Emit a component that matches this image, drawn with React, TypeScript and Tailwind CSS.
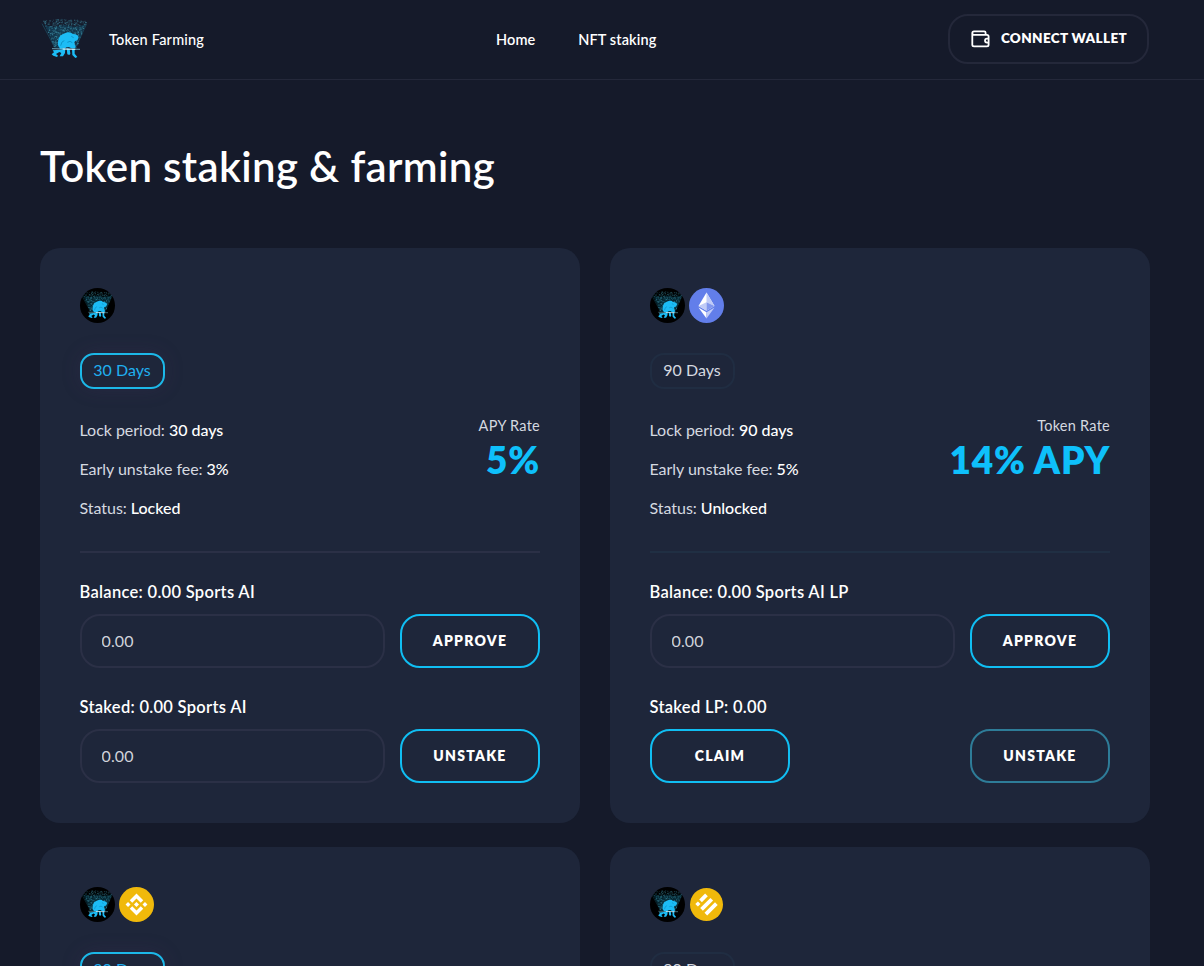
import React from "react";

const specks = Array.from({ length: 560 }, (_, i) => {
  const a = Math.abs(Math.sin(i * 12.9898 + 4.1) * 43758.5453) % 1;
  const b = Math.abs(Math.sin(i * 78.233 + 1.7) * 24634.6345) % 1;
  const c = Math.abs(Math.sin(i * 39.425 + 9.3) * 13758.127) % 1;
  const u = a * 2 - 1;
  const y = 40 + Math.abs(u) * 6 + b * 80;
  const spread = 69 - (y - 38) * 0.4;
  return { x: 104 + u * spread, y, o: 0.15 + c * c * 0.6 };
});

function Runner({ className }: { className: string }) {
  return (
    <svg viewBox="30 27 150 150" className={className}>
      <path d="M44 60 L76 130 H138 L166 58 L138 66 L104 60 L70 66 Z" fill="#0f6f92" opacity=".32" />
      {specks.map((s, i) => (
        <rect key={i} x={s.x} y={s.y} width="3" height="3" fill="#4aa5bd" opacity={s.o} />
      ))}
      <path d="M36 56 L74 126 M170 56 L140 122" stroke="#2799b8" strokeWidth="1.8" opacity=".5" />
      <path
        d="M83 119 L85 104 Q88 92 99 87 L112 82 Q122 80 129 87 L137 88 Q145 90 146 98 L142 106 L135 108 L132 116 L137 124 L136 130 L124 130 L117 126 L109 127 L104 131 L90 131 L86 124 Z"
        fill="#1cbcf5"
      />
      <path d="M68 136 L90 134 L106 131 L105 144 L99 154 L89 154 L94 144 L88 141 L78 147 L84 152 L81 156 L70 152 L65 148 L72 142 Z" fill="#1cbcf5" />
      <path d="M110 130 L119 132 L121 146 L118 150 L112 148 Z M126 131 H134 L134 146 L142 156 L136 159 L127 150 Z" fill="#1cbcf5" />
      <path d="M92 122 L96 111 L103 107 M112 112 L120 109 L127 113 M124 94 L131 98" stroke="#0a8fc2" strokeWidth="2.6" fill="none" />
      <path d="M66 131 L150 133" stroke="#8fe4fb" strokeWidth="2" />
      <path d="M98 132 L136 133" stroke="#fff" strokeWidth="2.4" />
    </svg>
  );
}

function SportsCoin() {
  return (
    <span className="block size-[35px] overflow-hidden rounded-full bg-black">
      <Runner className="size-[35px]" />
    </span>
  );
}

function EthCoin() {
  return (
    <svg viewBox="0 0 35 35" className="size-[35px]">
      <circle cx="17.5" cy="17.5" r="17.5" fill="#627eea" />
      <path d="M17.5 4.5 L25.5 18 L17.5 22.7 L9.5 18 Z" fill="#fff" />
      <path d="M17.5 4.5 V14.3 L25.5 18 Z M17.5 14.3 L9.5 18 L17.5 22.7 Z" fill="#c0cbf7" />
      <path d="M17.5 14.3 L25.5 18 L17.5 22.7 Z" fill="#8197ee" />
      <path d="M9.5 19.5 L17.5 24.2 V30.5 Z" fill="#fff" />
      <path d="M25.5 19.5 L17.5 24.2 V30.5 Z" fill="#c0cbf7" />
    </svg>
  );
}

function BnbCoin() {
  return (
    <svg viewBox="0 0 32 32" className="size-[35px]">
      <circle cx="16" cy="16" r="16" fill="#f0b90b" />
      <path
        fill="#fff"
        d="M12.116 14.404 16 10.52l3.886 3.886 2.26-2.26L16 6l-6.144 6.144zM6 16l2.26-2.26L10.52 16l-2.26 2.26zm6.116 1.596L16 21.48l3.886-3.886 2.26 2.259L16 26l-6.144-6.144-.003-.003zM21.48 16l2.26-2.26L26 16l-2.26 2.26zm-3.188-.002h.002V16L16 18.294l-2.291-2.29-.004-.004.004-.003.401-.402.195-.195L16 13.706l2.293 2.293z"
      />
    </svg>
  );
}

function BusdCoin() {
  return (
    <svg viewBox="0 0 35 35" className="size-[35px]">
      <circle cx="17.5" cy="17.5" r="16.5" fill="#f0b90b" />
      <g fill="#fff">
        <path d="M16.1 6.6 L18.8 9.3 L12.9 15.2 L10.2 12.5 Z" />
        <path d="M8.9 14.4 L11.5 17 L8.9 19.6 L6.3 17 Z" />
        <path d="M21.4 10.9 L24.1 13.6 L13.9 23.8 L11.2 21.1 Z" />
        <path d="M26 15.2 L28.7 17.9 L18.2 28.4 L15.5 25.7 Z" />
      </g>
    </svg>
  );
}

function WalletIcon() {
  return (
    <svg viewBox="0 0 20 18" className="h-[18px] w-5" fill="none" stroke="#fff" strokeWidth="1.8" strokeLinejoin="round">
      <path d="M15.6 4.8 V2.8 Q15.6 1.4 14.2 1.4 H4 Q2.3 1.4 2.3 3.1 V14.8 Q2.3 16.4 4 16.4 H16.9 Q18.6 16.4 18.6 14.8 V6.5 Q18.6 4.9 16.9 4.9 H4 Q2.3 4.9 2.3 3.1" />
      <path d="M18.6 8.6 H17 Q15 8.6 15 10.6 Q15 12.6 17 12.6 H18.6" />
    </svg>
  );
}

type Pool = {
  coin?: React.ReactNode;
  days: string;
  active: boolean;
  fee: string;
  status: string;
  rateLabel: string;
  rate: string;
  lp: boolean;
};

const pools: Pool[] = [
  { days: "30", active: true, fee: "3%", status: "Locked", rateLabel: "APY Rate", rate: "5%", lp: false },
  { coin: <EthCoin />, days: "90", active: false, fee: "5%", status: "Unlocked", rateLabel: "Token Rate", rate: "14% APY", lp: true },
  { coin: <BnbCoin />, days: "30", active: true, fee: "3%", status: "Locked", rateLabel: "APY Rate", rate: "5%", lp: false },
  { coin: <BusdCoin />, days: "90", active: false, fee: "5%", status: "Unlocked", rateLabel: "Token Rate", rate: "14% APY", lp: true },
];

function Detail({ label, value }: { label: string; value: string }) {
  return (
    <p className="text-[16px] leading-[39px] tracking-[-0.03px] text-[#d5d9e0]">
      {label} <span className="font-medium text-white">{value}</span>
    </p>
  );
}

function Action({ children, dim = false }: { children: string; dim?: boolean }) {
  return (
    <button
      className={`h-[54px] w-[140px] shrink-0 rounded-[20px] border-2 pb-px text-[14px] font-extrabold tracking-[1.25px] text-white ${dim ? "border-[#2e7c98]" : "border-[#10bef3]"}`}
    >
      {children}
    </button>
  );
}

function Amount() {
  return (
    <input
      defaultValue="0.00"
      className="h-[54px] w-[305px] rounded-[20px] border-2 border-[#2b3046] bg-transparent px-[19.5px] pb-px text-[16px] tracking-[0.1px] text-[#d0d3da] outline-none"
    />
  );
}

function PoolCard({ pool }: { pool: Pool }) {
  return (
    <section className="h-[575px] rounded-[20px] bg-[#1e263a] p-10">
      <div className="flex gap-1">
        <SportsCoin />
        {pool.coin}
      </div>
      <div
        className={`mt-[30px] flex h-9 w-[85px] items-center justify-center rounded-[14px] border-2 pr-px pb-0.5 text-[16px] ${pool.active ? "border-[#1cb8e8] text-[#20b0f0] shadow-[0_0_20px_rgba(80,50,100,0.2)]" : "border-[#202d42] text-[#d5d9e0]"}`}
      >
        {pool.days} Days
      </div>
      <div className="mt-[21px] flex justify-between">
        <div className="-ml-[0.5px]">
          <Detail label="Lock period:" value={`${pool.days} days`} />
          <Detail label="Early unstake fee:" value={pool.fee} />
          <Detail label="Status:" value={pool.status} />
        </div>
        <div className="pt-[6px] text-right">
          <p className="text-[14.5px] leading-5 tracking-[0.25px] text-[#d5d9e0]">{pool.rateLabel}</p>
          <p className="mt-0.5 text-[37px] leading-[44px] font-extrabold tracking-[0.8px] text-[#0ec0fb]">{pool.rate}</p>
        </div>
      </div>
      <div className={`mt-6 h-0.5 ${pool.active ? "bg-[#2b3046]" : "bg-[#202f43]"}`} />
      <p className="-ml-[0.5px] mt-[27px] text-[16.5px] leading-6 font-semibold tracking-[0.3px] text-white">
        Balance: 0.00 Sports AI{pool.lp ? " LP" : ""}
      </p>
      <div className="mt-[10px] flex justify-between">
        <Amount />
        <Action>APPROVE</Action>
      </div>
      <p className="-ml-[0.5px] mt-[27px] text-[16.5px] leading-6 font-semibold tracking-[0.3px] text-white">
        {pool.lp ? "Staked LP: 0.00" : "Staked: 0.00 Sports AI"}
      </p>
      <div className="mt-[10px] flex justify-between">
        {pool.lp ? <Action>CLAIM</Action> : <Amount />}
        <Action dim={pool.lp}>UNSTAKE</Action>
      </div>
    </section>
  );
}

export default function App() {
  return (
    <div className="h-[966px] w-full overflow-hidden bg-[#151a2a] font-['Lato','Open_Sans',sans-serif] text-white">
      <header className="flex h-20 items-center border-b border-[#24283a] pr-[55px] pb-px pl-10">
        <Runner className="size-[50px]" />
        <span className="ml-[19px] w-[387px] pt-px text-[14.5px] font-medium tracking-[0.2px]">Token Farming</span>
        <nav className="flex flex-1 gap-[43px] pt-px text-[14.5px] font-semibold tracking-[0.1px]">
          <a>Home</a>
          <a>NFT staking</a>
        </nav>
        <button className="flex h-[50px] w-[201px] items-center justify-center gap-[11px] rounded-[20px] border-2 border-[#24283a] text-[13.5px] font-extrabold tracking-[0.35px]">
          <WalletIcon />
          <span className="pb-0.5">CONNECT WALLET</span>
        </button>
      </header>
      <main className="w-[1150px] pl-10">
        <h1 className="pt-[59px] text-[42px] leading-[54px] font-semibold tracking-[0.35px]">Token staking &amp; farming</h1>
        <div className="mt-[55px] grid grid-cols-2 gap-x-[30px] gap-y-6">
          {pools.map((pool, i) => (
            <PoolCard key={i} pool={pool} />
          ))}
        </div>
      </main>
    </div>
  );
}
